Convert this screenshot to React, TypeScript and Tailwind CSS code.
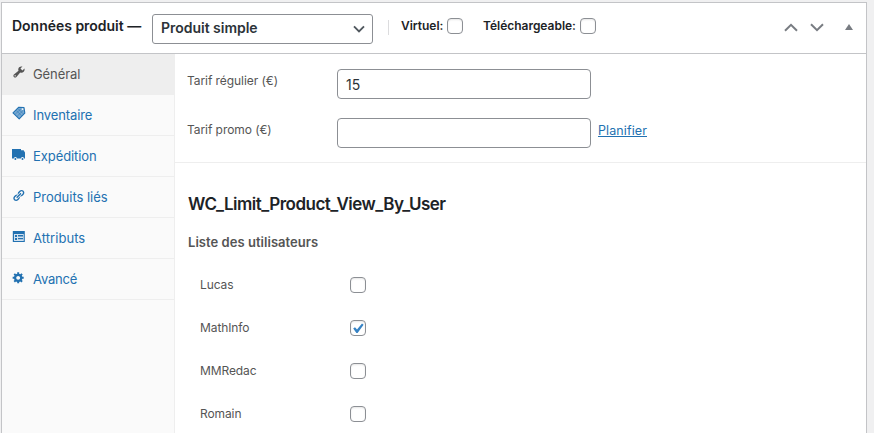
import type { ReactNode } from 'react';

const BLUE = 'text-[#2271b1]';

function Wrench() {
  return (
    <svg viewBox="0 0 20 20" className="size-[14px] -translate-y-px" fill="currentColor">
      <path d="M16.68 9.77c-1.34 1.34-3.3 1.67-4.95.99l-5.41 6.52c-.99.99-2.59.99-3.58 0s-.99-2.59 0-3.57l6.52-5.42c-.68-1.65-.35-3.61.99-4.95 1.28-1.28 3.12-1.62 4.72-1.06l-2.89 2.89 2.82 2.82 2.86-2.87c.53 1.58.18 3.39-1.08 4.65zM3.81 16.21c.4.39 1.04.39 1.43 0 .4-.4.4-1.04 0-1.43-.39-.4-1.03-.4-1.43 0-.39.39-.39 1.03 0 1.43z" />
    </svg>
  );
}

function Tag() {
  return (
    <svg viewBox="0 0 14 14" className="size-[14px] -translate-y-px" fill="none">
      <path d="M1 6.8 6.8 1.2 12 1.6 12.8 7.2 7.2 12.8Z" fill="#78a9d2" stroke="#2271b1" strokeWidth="1.1" strokeLinejoin="round" />
      <path d="M3.2 8.2 9 2.8M5.2 10.2l5.8-5.6M4.2 4.4l5.4 5.4M6.2 2.8l5 5" stroke="#2271b1" strokeWidth=".5" />
      <circle cx="10.6" cy="3.1" r=".9" fill="#fafafa" />
    </svg>
  );
}

function Truck() {
  return (
    <svg viewBox="0 0 14 14" className="size-[14px] -translate-y-px" fill="currentColor">
      <path d="M0 2h9v1.2h2.6L13 5.4v6.2h-.9a1.6 1.6 0 0 0-3.2 0H5a1.6 1.6 0 0 0-3.2 0H0Z" />
      <circle cx="3.4" cy="11.9" r="1" />
      <circle cx="10.5" cy="11.9" r="1" />
    </svg>
  );
}

function LinkIcon() {
  return (
    <svg viewBox="0 0 20 20" className="size-[13px] -translate-y-px" fill="currentColor">
      <path d="M17.74 2.76c1.68 1.69 1.68 4.41 0 6.1l-1.53 1.52c-1.12 1.12-2.7 1.47-4.14 1.09l2.62-2.61.76-.77.76-.76c.84-.84.84-2.2 0-3.04-.84-.85-2.2-.85-3.04 0l-.77.76-3.38 3.38c-.37-1.44-.02-3.02 1.1-4.14l1.52-1.53c1.69-1.68 4.42-1.68 6.1 0zM8.59 13.43l5.34-5.34c.42-.42.42-1.1 0-1.52-.44-.43-1.13-.39-1.53 0l-5.33 5.34c-.42.42-.42 1.1 0 1.52.44.43 1.13.39 1.52 0zm-.76 2.29l4.14-4.15c.38 1.44.03 3.02-1.09 4.14l-1.52 1.53c-1.69 1.68-4.41 1.68-6.1 0-1.68-1.68-1.68-4.42 0-6.1l1.53-1.52c1.12-1.12 2.7-1.47 4.14-1.1l-4.14 4.15c-.85.84-.85 2.2 0 3.05.84.84 2.2.84 3.04 0z" />
    </svg>
  );
}

function ListBox() {
  return (
    <svg viewBox="0 0 14 14" className="size-[14px]">
      <path d="M.8 1h12v11H.8Z" fill="#2271b1" />
      <path d="M2 4h9.7v7H2Z" fill="#d3e2ef" />
      <path d="M3 5h2v2H3zM3 8h2v2H3zM6 5h5v1.6H6zM6 8h5v1.3H6z" fill="#2271b1" />
    </svg>
  );
}

function Gear() {
  return (
    <svg viewBox="0 0 20 20" className="size-[13px] -translate-y-px" fill="currentColor">
      <path d="M18 12h-2.18c-.17.7-.44 1.35-.81 1.93l1.54 1.54-2.1 2.1-1.54-1.54c-.58.36-1.23.63-1.91.79V19H8v-2.18c-.68-.16-1.33-.43-1.91-.79l-1.54 1.54-2.12-2.12 1.54-1.54c-.36-.58-.63-1.23-.79-1.91H1V9.03h2.17c.16-.7.44-1.35.8-1.94L2.43 5.55l2.1-2.1 1.54 1.54c.58-.37 1.24-.64 1.93-.81V2h3v2.18c.68.16 1.33.43 1.91.79l1.54-1.54 2.12 2.12-1.54 1.54c.36.59.64 1.24.8 1.94H18V12zm-8.5 1.5c1.66 0 3-1.34 3-3s-1.34-3-3-3-3 1.34-3 3 1.34 3 3 3z" />
    </svg>
  );
}

function Chevron({ up = false }: { up?: boolean }) {
  return (
    <svg viewBox="0 0 14 9" className="h-[9px] w-[14px]" fill="none" stroke="#787c82" strokeWidth="2">
      <path d={up ? 'M1 7.8 7 1.9l6 5.9' : 'M1 1.2 7 7.1l6-5.9'} />
    </svg>
  );
}

function Checkbox({ checked = false }: { checked?: boolean }) {
  return (
    <span className="flex size-4 shrink-0 items-center justify-center rounded-[4px] border border-[#8c8f94] bg-white shadow-[inset_0_1px_2px_rgba(0,0,0,0.1)]">
      {checked && (
        <svg viewBox="0 0 14 14" className="size-[14px] shrink-0" fill="#3582c4">
          <path d="M2.2 7.6 4 6.3l2 2.3L11 2.6l1.6 1.1-6 8.3H5.4Z" />
        </svg>
      )}
    </span>
  );
}

const tabs: { label: string; icon: ReactNode; track: string }[] = [
  { label: 'Général', icon: <Wrench />, track: 'tracking-[-0.1px]' },
  { label: 'Inventaire', icon: <Tag />, track: 'tracking-[-0.1px]' },
  { label: 'Expédition', icon: <Truck />, track: 'tracking-[-0.08px]' },
  { label: 'Produits liés', icon: <LinkIcon />, track: 'tracking-[-0.03px]' },
  { label: 'Attributs', icon: <ListBox />, track: 'tracking-[0.05px]' },
  { label: 'Avancé', icon: <Gear />, track: 'tracking-[-0.2px]' },
];

const users = [
  { name: 'Lucas' },
  { name: 'MathInfo', checked: true },
  { name: 'MMRedac' },
  { name: 'Romain' },
];

function Field({ label, value, children }: { label: string; value?: string; children?: ReactNode }) {
  return (
    <div className="flex h-[30px] items-start">
      <span className="w-[150px] pt-[4px] text-[12px] leading-4 tracking-[-0.07px]">{label}</span>
      <span className="flex h-[30px] w-[254px] items-center rounded-[4px] border border-[#8c8f94] bg-white px-2 text-[14px] text-[#2c3338]">
        {value}
      </span>
      {children}
    </div>
  );
}

export default function App() {
  return (
    <div className="h-[433px] w-[874px] overflow-hidden bg-[#f0f0f1] pt-[2px] pl-px font-['Inter',sans-serif] text-[#555]">
      <div className="flex h-[440px] w-[866px] flex-col border border-[#c3c4c7] bg-white">
        <header className="flex h-[51px] shrink-0 items-center border-b border-[#c3c4c7] pl-[10px] text-[#1d2327]">
          <span className="w-[140px] pb-[5px] text-[14px] font-semibold tracking-[-0.02px] whitespace-nowrap">Données produit —</span>
          <span className="mt-[1px] flex h-[30px] w-[221px] items-center justify-between rounded-[3px] border border-[#8c8f94] pr-[7px] pb-[2px] pl-2 text-[14px] font-semibold tracking-[-0.02px] text-[#2c3338]">
            Produit simple
            <svg viewBox="0 0 12 8" className="mt-[2px] h-2 w-3" fill="none" stroke="#50575e" strokeWidth="1.9">
              <path d="m1 1.3 5 5 5-5" />
            </svg>
          </span>
          <span className="mb-[2px] ml-[15px] h-[15px] w-px bg-[#dcdcde]" />
          <span className="mb-[4px] ml-[12px] flex w-[82px] items-center text-[12px] font-semibold tracking-[-0.02px] whitespace-nowrap">
            <span className="w-[46px] shrink-0">Virtuel:</span>
            <Checkbox />
          </span>
          <span className="mb-[4px] flex items-center text-[12px] font-semibold tracking-[-0.02px] whitespace-nowrap">
            <span className="w-[97px] shrink-0">Téléchargeable:</span>
            <Checkbox />
          </span>
          <span className="mr-[13px] mb-[1px] ml-auto flex items-center">
            <Chevron up />
            <span className="ml-[12px] flex"><Chevron /></span>
            <svg viewBox="0 0 8 6" className="mb-[2px] ml-[21px] h-[6px] w-2" fill="#787c82">
              <path d="M4 0 8 6H0Z" />
            </svg>
          </span>
        </header>
        <div className="flex grow">
          <nav className="w-[173px] shrink-0 border-r border-[#eee] bg-[#fafafa]">
            {tabs.map((tab, i) => (
              <div
                key={tab.label}
                className={`flex h-[41px] items-start border-b border-[#eee] pt-[11px] pl-[10px] ${i === 0 ? 'bg-[#eee] text-[#555]' : BLUE}`}
              >
                <span className="flex h-[16px] w-[21px] items-center">{tab.icon}</span>
                <span className={`text-[13px] leading-[19px] ${tab.track}`}>{tab.label}</span>
              </div>
            ))}
          </nav>
          <main className="grow">
            <section className="flex h-[109px] flex-col gap-[19px] border-b border-[#eee] pt-[15px] pl-[12px]">
              <Field label="Tarif régulier (€)" value="15" />
              <Field label="Tarif promo (€)">
                <a className="ml-[7px] pt-[5px] text-[12.5px] leading-4 tracking-[0.1px] text-[#2271b1] underline">Planifier</a>
              </Field>
            </section>
            <section className="pl-[13px]">
              <h2 className="pt-[29px] text-[17px] leading-6 font-semibold tracking-[-0.51px] text-[#1d2327]">
                WC_Limit_Product_View_By_User
              </h2>
              <h3 className="pt-[16px] text-[13px] leading-5 font-semibold tracking-[0.04px]">Liste des utilisateurs</h3>
              <ul className="pt-[25px] pl-[12px]">
                {users.map((user) => (
                  <li key={user.name} className="flex h-[43px] items-start">
                    <span className="w-[150px] text-[12px] leading-4 tracking-[-0.1px]">{user.name}</span>
                    <Checkbox checked={user.checked} />
                  </li>
                ))}
              </ul>
            </section>
          </main>
        </div>
      </div>
    </div>
  );
}
